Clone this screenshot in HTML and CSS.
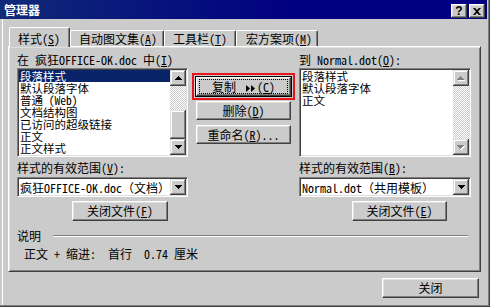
FILE: index.html
```html
<!DOCTYPE html>
<html lang="zh-CN">
<head>
  <meta charset="UTF-8">
  <meta name="viewport" content="width=device-width, initial-scale=1.0">
  <title>管理器</title>
  <link rel="stylesheet" href="styles.css">
</head>
<body>
  <div class="window">
    <div class="titlebar">
      <span class="title">管理器</span>
      <div class="caption-btns">
        <span class="cap-btn help">?</span>
        <span class="cap-btn">
          <svg width="8" height="7" viewBox="0 0 8 7"><path d="M0 0h2l2 2 2-2h2L5 3.5 8 7H6L4 5 2 7H0l3-3.5z"/></svg>
        </span>
      </div>
    </div>

    <div class="content">
      <div class="tabs">
        <div class="tab active">样式(<u>S</u>)</div>
        <div class="tab t2">自动图文集(<u>A</u>)</div>
        <div class="tab t3">工具栏(<u>T</u>)</div>
        <div class="tab t4">宏方案项(<u>M</u>)</div>
      </div>

      <div class="panel">
        <div class="columns">
          <!-- 左侧：当前文档 -->
          <div class="col">
            <div class="label">在 疯狂OFFICE-OK.doc 中(<u>I</u>)</div>
            <div class="listbox">
              <ul class="items">
                <li class="selected">段落样式</li>
                <li>默认段落字体</li>
                <li>普通 (Web)</li>
                <li>文档结构图</li>
                <li>已访问的超级链接</li>
                <li>正文</li>
                <li>正文样式</li>
              </ul>
              <div class="scrollbar">
                <span class="sb-btn"><svg width="7" height="4" viewBox="0 0 7 4"><path d="M3 0h1v1h1v1h1v1h1v1H0V3h1V2h1V1h1z"/></svg></span>
                <span class="sb-track"></span>
                <span class="sb-thumb"></span>
                <span class="sb-btn"><svg width="7" height="4" viewBox="0 0 7 4"><path d="M0 0h7v1H6v1H5v1H4v1H3V3H2V2H1V1H0z"/></svg></span>
              </div>
            </div>
            <div class="label scope">样式的有效范围(<u>V</u>):</div>
            <div class="combo">
              <span class="combo-text">疯狂OFFICE-OK.doc（文档）</span>
              <span class="drop"><svg width="7" height="4" viewBox="0 0 7 4"><path d="M0 0h7v1H6v1H5v1H4v1H3V3H2V2H1V1H0z"/></svg></span>
            </div>
            <button class="btn file-btn">关闭文件(<u>F</u>)</button>
          </div>

          <!-- 中间操作按钮 -->
          <div class="actions">
            <button class="btn default"><span class="focus">复制 <svg class="arrows" width="10" height="7" viewBox="0 0 10 7"><path d="M0 0l4 3.5L0 7zM5 0l4 3.5L5 7z"/></svg>(<u>C</u>)</span></button>
            <button class="btn">删除(<u>D</u>)</button>
            <button class="btn">重命名(<u>R</u>)...</button>
          </div>

          <!-- 右侧：模板 -->
          <div class="col right">
            <div class="label">到 Normal.dot(<u>O</u>):</div>
            <div class="listbox">
              <ul class="items">
                <li>段落样式</li>
                <li>默认段落字体</li>
                <li>正文</li>
              </ul>
              <div class="scrollbar">
                <span class="sb-btn off"><svg width="8" height="5" viewBox="0 0 8 5"><path class="shade" d="M4 1h1v1h1v1h1v1h1v1H1V4h1V3h1V2h1z"/><path d="M3 0h1v1h1v1h1v1h1v1H0V3h1V2h1V1h1z"/></svg></span>
                <span class="sb-track"></span>
                <span class="sb-btn off"><svg width="8" height="5" viewBox="0 0 8 5"><path class="shade" d="M1 1h7v1H7v1H6v1H5v1H4V4H3V3H2V2H1z"/><path d="M0 0h7v1H6v1H5v1H4v1H3V3H2V2H1V1H0z"/></svg></span>
              </div>
            </div>
            <div class="label scope">样式的有效范围(<u>B</u>):</div>
            <div class="combo">
              <span class="combo-text">Normal.dot（共用模板）</span>
              <span class="drop"><svg width="7" height="4" viewBox="0 0 7 4"><path d="M0 0h7v1H6v1H5v1H4v1H3V3H2V2H1V1H0z"/></svg></span>
            </div>
            <button class="btn file-btn">关闭文件(<u>E</u>)</button>
          </div>
        </div>

        <div class="desc">
          <div class="desc-head"><span>说明</span><span class="rule"></span></div>
          <div class="desc-text">正文 + 缩进:  首行  0.74 厘米</div>
        </div>
      </div>

      <div class="footer">
        <button class="btn close-btn">关闭</button>
      </div>
    </div>
  </div>
</body>
</html>
```

FILE: styles.css
```css
* {
  box-sizing: border-box;
}
body {
  margin: 0;
  font-family: "Noto Sans Mono CJK SC", "Noto Sans CJK SC", "Liberation Sans", sans-serif;
  font-size: 12px;
  color: #000;
  background: #cbcbcb;
}
u {
  text-decoration: underline;
}

.window {
  width: 490px;
  height: 307px;
  background: #cbcbcb;
  box-shadow: inset -1px -1px #404040, inset -2px -2px #808080, inset 2px 0 #cbcbcb, inset 3px 0 #fff;
}

/* 标题栏 */
.titlebar {
  width: 487px;
  height: 19px;
  display: flex;
  justify-content: space-between;
  padding: 0 2px 0 4px;
  background: linear-gradient(90deg, #102a78, #000080 60%);
  color: #fff;
}
.title {
  font-weight: bold;
  line-height: 19px;
}
.caption-btns {
  display: flex;
  gap: 2px;
  padding-top: 4px;
}
.cap-btn {
  width: 16px;
  height: 14px;
  display: flex;
  align-items: center;
  justify-content: center;
  background: #cbcbcb;
  color: #000;
  box-shadow: inset -1px -1px #404040, inset 1px 1px #fff, inset -2px -2px #808080, inset 2px 2px #dfdfdf;
}
.cap-btn.help {
  font-family: "Liberation Sans", sans-serif;
  font-weight: bold;
  font-size: 12px;
  line-height: 14px;
}

.content {
  padding: 8px 9px 0 8px;
}

/* 选项卡 */
.tabs {
  display: flex;
  align-items: flex-end;
  height: 19px;
  position: relative;
  z-index: 1;
}
.tab {
  height: 16px;
  padding: 1px 0 0 8px;
  line-height: 14px;
  white-space: nowrap;
  border-top: 1px solid #fff;
  border-left: 1px solid #fff;
  border-right: 1px solid #404040;
  border-radius: 2px 2px 0 0;
  box-shadow: inset -1px 0 #808080;
  background: #cbcbcb;
}
.tab.active {
  width: 61px;
  height: 20px;
  margin: 0 0 -1px 1px;
  padding-top: 4px;
}
.tab.t2 { width: 94px; }
.tab.t3 { width: 72px; }
.tab.t4 { width: 82px; padding-left: 9px; }

.panel {
  height: 226px;
  padding: 5px 8px 0 8px;
  border: 1px solid;
  border-color: #fff #404040 #404040 #fff;
  box-shadow: inset 1px 1px #dfdfdf, inset -1px -1px #808080;
}

.columns {
  display: flex;
  gap: 8px;
}
.col {
  width: 171px;
}
.col.right {
  width: 172px;
}
.label {
  height: 16px;
  line-height: 16px;
  white-space: nowrap;
}
.label.scope {
  margin-top: 3px;
}

/* 列表框 */
.listbox {
  height: 89px;
  display: flex;
  padding: 1px;
  background: #fff;
  border: 1px solid;
  border-color: #808080 #fff #fff #808080;
  box-shadow: inset 1px 1px #404040, inset -1px -1px #dfdfdf;
}
.items {
  flex: 1;
  list-style: none;
  margin: 0;
  padding: 0;
  overflow: hidden;
}
.items li {
  height: 12px;
  font-size: 11.5px;
  line-height: 12px;
  padding-left: 1px;
  white-space: nowrap;
}
.items li.selected {
  background: #0a246a;
  color: #fff;
}

.scrollbar {
  width: 16px;
  display: flex;
  flex-direction: column;
}
.sb-btn, .sb-thumb, .drop {
  display: flex;
  align-items: center;
  justify-content: center;
  background: #cbcbcb;
  box-shadow: inset -1px -1px #404040, inset 1px 1px #dfdfdf, inset -2px -2px #808080, inset 2px 2px #fff;
}
.sb-btn {
  height: 16px;
}
.sb-thumb {
  height: 29px;
}
.sb-track {
  flex: 1;
  background: repeating-conic-gradient(#fff 0 25%, #cbcbcb 0 50%) 0 0 / 2px 2px;
}
.sb-btn.off path {
  fill: #808080;
}
.sb-btn.off path.shade {
  fill: #fff;
}

/* 下拉框 */
.combo {
  margin-top: 1px;
  height: 20px;
  display: flex;
  padding: 2px 2px 2px 1px;
  background: #fff;
  border: 1px solid;
  border-color: #808080 #fff #fff #808080;
  box-shadow: inset 1px 1px #404040, inset -1px -1px #dfdfdf;
}
.combo-text {
  flex: 1;
  min-width: 0;
  padding-left: 1px;
  line-height: 15px;
  white-space: nowrap;
  overflow: hidden;
}
.combo .drop {
  flex: none;
  width: 16px;
  margin: -1px -1px -1px 0;
}

/* 按钮 */
.btn {
  display: block;
  padding: 0;
  font: inherit;
  color: #000;
  text-align: center;
  line-height: 16px;
  background: #cbcbcb;
  border: 1px solid;
  border-color: #fff #404040 #404040 #fff;
  box-shadow: inset -1px -1px #808080, inset 1px 1px #dfdfdf;
}
.file-btn {
  margin: 4px 0 0 55px;
  width: 96px;
  height: 20px;
}
.col.right .file-btn {
  margin-left: 53px;
  width: 95px;
}

.actions {
  width: 95px;
  padding-top: 25px;
  display: flex;
  flex-direction: column;
  gap: 5px;
}
.actions .btn {
  height: 19px;
}
.btn.default {
  box-shadow: 0 0 0 1px #000, inset -1px -1px #808080, inset 1px 1px #dfdfdf;
  outline: 2px solid #e8141c;
  outline-offset: 2px;
}
.focus {
  display: block;
  margin: 1px 2px;
  height: 15px;
  line-height: 13px;
  border: 1px dotted #000;
}
.arrows {
  margin: 0 1px 0 4px;
  vertical-align: 0;
}

/* 说明 */
.desc {
  margin-top: 8px;
}
.desc-head {
  display: flex;
  align-items: center;
  height: 14px;
  line-height: 14px;
  margin-right: 4px;
}
.rule {
  flex: 1;
  margin-left: 12px;
  border-top: 1px solid #808080;
  border-bottom: 1px solid #fff;
}
.desc-text {
  margin-top: 4px;
  padding-left: 7px;
  line-height: 14px;
  white-space: pre;
}

.footer {
  display: flex;
  justify-content: flex-end;
  padding: 6px 2px 0 0;
}
.close-btn {
  width: 97px;
  height: 20px;
}
```
